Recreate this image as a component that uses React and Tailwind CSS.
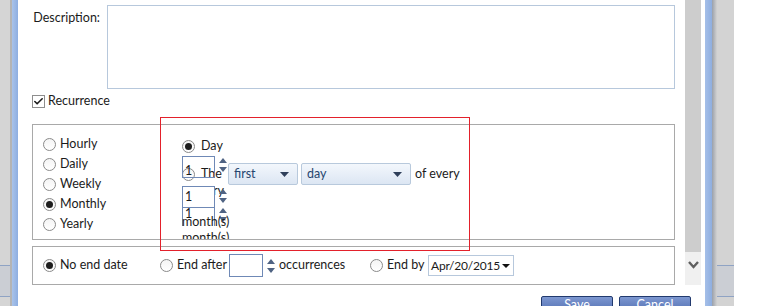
import { Check } from "lucide-react";

const font = { fontFamily: 'Lato, "Noto Sans", sans-serif' };

function Radio({ checked }) {
    return (
        <span className="w-[13px] h-[13px] rounded-full border border-[#8a8a8a] bg-gradient-to-b from-[#f4f4f4] to-white flex items-center justify-center shrink-0">
            {checked && <span className="w-[7px] h-[7px] rounded-full bg-[#1e1e1e]" />}
        </span>
    );
}

function RadioItem({ checked, label, className = "" }) {
    return (
        <div className={"flex items-center gap-[4px] h-[20px] shrink-0 " + className}>
            <Radio checked={checked} />
            <span>{label}</span>
        </div>
    );
}

function Spinner({ color = "#4f6383" }) {
    return (
        <div className="flex flex-col gap-[4px] w-[10px] items-center">
            <svg width="10" height="5" viewBox="0 0 10 5"><path d="M1 5 L5 0 L9 5 Z" fill={color} /></svg>
            <svg width="10" height="5" viewBox="0 0 10 5"><path d="M1 0 L5 5 L9 0 Z" fill={color} /></svg>
        </div>
    );
}

function Select({ value, width }) {
    return (
        <div
            className="h-[22px] rounded-[2px] border border-[#b8c9dc] bg-gradient-to-b from-[#f3f7fc] to-[#dce6f3] flex items-center justify-between pl-[5px] pr-[8px] text-[#26466f] shrink-0"
            style={{ width }}
        >
            <span>{value}</span>
            <svg width="9" height="5" viewBox="0 0 9 5"><path d="M0 0 L9 0 L4.5 5 Z" fill="#2f3f5a" /></svg>
        </div>
    );
}

export default function App() {
    return (
        <div className="w-[757px] h-[306px] overflow-hidden flex bg-white text-[12.5px] text-[#1b1b1b]" style={font}>
            {/* left background strip */}
            <div className="w-[10px] bg-[#d5d5d5] flex flex-col">
                <div className="h-[265px]" />
                <div className="h-[31px] border-t border-[#8fa3c4] bg-[#cbced4]" />
                <div className="border-t border-[#8fa3c4] flex-1" />
            </div>
            <div className="w-[2px] bg-[#b4b4b4]" />
            <div className="w-[6px] bg-gradient-to-r from-[#a9c3ea] to-[#8eaee0]" />

            {/* dialog body */}
            <div className="w-[687px] flex flex-col">
                <div className="h-[285px] flex">
                    <div className="w-[667px] pl-[14px] pt-[5px] flex flex-col">
                        <div className="flex">
                            <div className="w-[75px] text-right pr-[7px] pt-[4px]">Description:</div>
                            <div className="w-[568px] h-[84px] border border-[#b7c8dc] bg-white" />
                        </div>

                        <div className="flex items-center gap-[3px] mt-[6px] h-[13px]">
                            <span className="w-[13px] h-[13px] border border-[#8e8e8e] bg-white flex items-center justify-center">
                                <Check size={11} strokeWidth={3.5} color="#1c1c1c" />
                            </span>
                            <span>Recurrence</span>
                        </div>

                        {/* recurrence pattern group */}
                        <div className="relative mt-[16px] w-[643px] h-[116px] border border-[#a9a9a9] flex">
                            <div className="absolute left-[127px] top-[-8px] w-[310px] h-[134px] border border-[#e3212b] pointer-events-none z-10" />
                            <div className="w-[127px] pl-[10px] pt-[9px] flex flex-col">
                                <RadioItem label="Hourly" />
                                <RadioItem label="Daily" />
                                <RadioItem label="Weekly" />
                                <RadioItem checked label="Monthly" />
                                <RadioItem label="Yearly" />
                            </div>
                            <div className="relative flex-1 pl-[22px] pt-[11px] overflow-hidden">
                                <RadioItem checked label="Day" className="gap-[6px]" />
                                <div className="flex items-center gap-[3px] mt-[7px] h-[22px]">
                                    <div className="flex items-center gap-[6px] w-[43px] shrink-0">
                                        <Radio />
                                        <span>The</span>
                                    </div>
                                    <Select value="first" width={70} />
                                    <Select value="day" width={110} />
                                    <span className="ml-[1px]">of every</span>
                                </div>

                                {/* leftover of a wrapped label, peeking out behind the inputs */}
                                <span className="absolute left-[53px] top-[60px] leading-[12px]">ry</span>

                                {/* overlapping spinner stack */}
                                <div className="absolute left-[22px] top-[31px] flex flex-col">
                                    <div className="flex gap-[3px]">
                                        <div className="w-[33px] h-[22px] border border-[#6f89b6] flex items-end pl-[2px] leading-[12px] overflow-hidden">1</div>
                                        <div className="pt-[2px]"><Spinner /></div>
                                    </div>
                                    <div className="flex gap-[3px] mt-[8px]">
                                        <div className="w-[33px] h-[22px] border border-[#6f89b6] bg-white flex items-center pl-[2px]">1</div>
                                        <div className="pt-[3px]"><Spinner /></div>
                                    </div>
                                    <div className="flex gap-[3px]">
                                        <div className="w-[33px] h-[18px] border-x border-[#6f89b6] pl-[2px] leading-[12px]">1</div>
                                        <div><Spinner /></div>
                                    </div>
                                </div>
                                <div className="absolute left-[22px] top-[89px] leading-[16px]">
                                    <div>month(s)</div>
                                    <div>month(s)</div>
                                </div>
                            </div>
                        </div>

                        {/* range group */}
                        <div className="mt-[6px] w-[643px] h-[39px] border border-[#a9a9a9] flex items-center pl-[10px]">
                            <RadioItem checked label="No end date" className="w-[117px]" />
                            <RadioItem label="End after" className="w-[69px]" />
                            <div className="w-[34px] h-[23px] border border-[#6f89b6] bg-white shrink-0" />
                            <div className="ml-[3px] mr-[3px]"><Spinner /></div>
                            <span className="w-[91px] shrink-0">occurrences</span>
                            <RadioItem label="End by" className="w-[58px]" />
                            <div className="w-[86px] h-[21px] border border-[#b7c8dc] flex items-center justify-between pl-[2px] pr-[3px] shrink-0 text-[12px] tracking-[-0.2px]">
                                <span>Apr/20/2015</span>
                                <svg width="8" height="4" viewBox="0 0 8 4" className="shrink-0"><path d="M0 0 L8 0 L4 4 Z" fill="#111" /></svg>
                            </div>
                        </div>
                    </div>

                    {/* scrollbar */}
                    <div className="w-[16px] flex flex-col">
                        <div className="h-[252px] bg-[#cdcdcd]" />
                        <div className="flex-1 bg-[#f0f0f0] flex justify-center pt-[8px]">
                            <svg width="11" height="9" viewBox="0 0 11 9"><path d="M1 2 L5.5 7 L10 2" stroke="#5f5f5f" strokeWidth="2.4" fill="none" /></svg>
                        </div>
                    </div>
                </div>

                {/* buttons */}
                <div className="flex gap-[6px] pl-[523px] pt-[11px]">
                    <div className="w-[72px] h-[20px] rounded-t-[2px] border border-[#223a6e] bg-gradient-to-b from-[#7d97d0] to-[#4b68ad] text-white text-center leading-[16px]">Save</div>
                    <div className="w-[72px] h-[20px] rounded-t-[2px] border border-[#223a6e] bg-gradient-to-b from-[#7d97d0] to-[#4b68ad] text-white text-center leading-[16px]">Cancel</div>
                </div>
            </div>

            {/* right border and background */}
            <div className="w-[7px] bg-gradient-to-r from-[#a5bfe8] to-[#8eaee0]" />
            <div className="w-[5px] bg-gradient-to-r from-[#9aa0aa] to-[#d2d2d2]" />
            <div className="w-[17px] bg-[#d3d3d3] flex flex-col">
                <div className="h-[265px]" />
                <div className="h-[31px] border-t border-[#8fa3c4] bg-[#cbced4]" />
                <div className="border-t border-[#8fa3c4] flex-1" />
            </div>
            <div className="flex-1 bg-white" />
        </div>
    );
}
